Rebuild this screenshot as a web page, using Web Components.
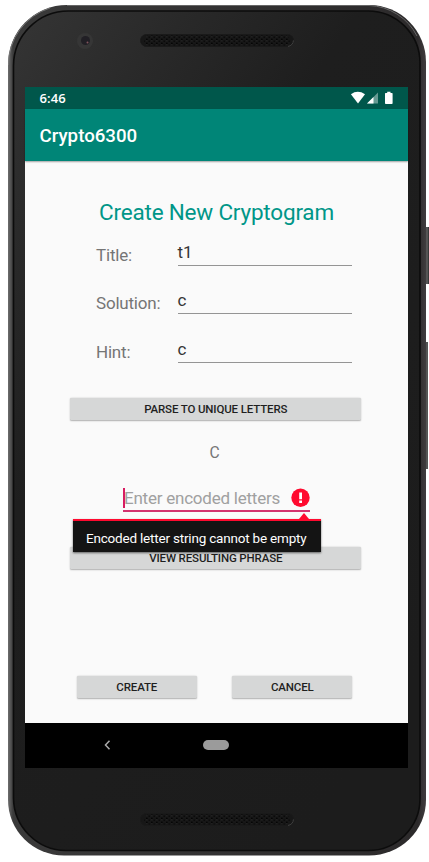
<!DOCTYPE html>
<html lang="en">
<head>
<meta charset="utf-8">
<title>Crypto6300</title>
<style>
html,body{margin:0;background:#fff;font-family:Roboto,"Liberation Sans",sans-serif}
body{width:429px;height:862px;overflow:hidden}
</style>
</head>
<body>
<phone-frame>
  <status-bar time="6:46"></status-bar>
  <app-bar>Crypto6300</app-bar>
  <cryptogram-form></cryptogram-form>
  <nav-bar></nav-bar>
</phone-frame>
<script>
function define(name, render) {
  customElements.define(name, class extends HTMLElement {
    constructor() {
      super();
      const t = document.createElement('template');
      t.innerHTML = render(this);
      this.attachShadow({mode: 'open'}).append(t.content.cloneNode(true));
    }
  });
}

define('speaker-grille', () => `
<style>
:host{display:block;width:154px;height:13px}
svg{display:block}
</style>
<svg width="154" height="13" viewBox="0 0 154 13">
<defs><pattern id="p" width="5" height="4" patternUnits="userSpaceOnUse">
<rect x="1" y="0.6" width="1.7" height="1.7" fill="#050505"/><rect x="3.5" y="2.5" width="1.7" height="1.5" fill="#0b0b0b"/><rect x="1" y="2.5" width="1.5" height=".6" fill="#2d2d2d"/></pattern></defs>
<rect x=".5" y=".5" width="153" height="12" rx="6" fill="#171717" stroke="#1a1a1a"/>
<rect x="4" y="1.6" width="146" height="10" rx="5" fill="url(#p)"/>
<path d="M148 12.4a6 6 0 0 0 5.400-6" fill="none" stroke="#4a4a4a" stroke-width=".8"/>
</svg>`);

define('phone-frame', () => `
<style>
:host{display:block;position:relative;width:429px;height:862px}
.case{box-sizing:border-box;position:absolute;left:0;top:0}
.shell{display:flex;flex-direction:column;align-items:center;position:absolute;left:25px;top:0;width:383px;height:862px}
.top{height:87px;display:flex;width:100%}
.bottom{height:94px;display:flex;width:100%}
.top speaker-grille{margin:34px 0 0 115px}
.bottom speaker-grille{margin:45px 0 0 115px}
.screen{width:383px;height:681px;display:flex;flex-direction:column;background:#fafafa}
</style>
<svg class="case" width="429" height="862" viewBox="0 0 429 862">
<defs>
<linearGradient id="g" x1="0" y1="0" x2=".7" y2="1"><stop offset="0" stop-color="#353535"/><stop offset=".2" stop-color="#292929"/><stop offset=".4" stop-color="#1e1e1e"/><stop offset="1" stop-color="#1c1c1c"/></linearGradient>
<linearGradient id="e" x1="0" y1="0" x2="1" y2="0"><stop offset="0" stop-color="#6e6e6e"/><stop offset=".012" stop-color="#3a3a3a"/><stop offset=".98" stop-color="#2c2a2b"/><stop offset="1" stop-color="#403c3e"/></linearGradient>
</defs>
<rect x="425" y="227" width="4" height="57" fill="#555"/><rect x="428" y="227" width="1" height="57" fill="#393939"/>
<rect x="425" y="342" width="3" height="127" fill="#555"/>
<path d="M67 5H369A57 57 0 0 1 426 62V800A57 55.500 0 0 1 369 855.500H64A56 55.500 0 0 1 8 800V64A59 59 0 0 1 67 5Z" fill="url(#e)"/>
<path d="M67 5.500H369A56 56 0 0 1 417 36" fill="none" stroke="#666"/>
<path d="M8.500 65A59 59 0 0 1 50 8" fill="none" stroke="#777"/>
<path d="M69 11H367A52 52 0 0 1 420 63V798A52 52 0 0 1 367 850.500H66A53 53 0 0 1 13.500 798V66A55 55 0 0 1 69 11Z" fill="url(#g)" stroke="#0c0c0c" stroke-width="1.600"/>
<circle cx="85" cy="41" r="8" fill="#363636"/><circle cx="85.500" cy="40.500" r="4.500" fill="#211f25"/><circle cx="87.500" cy="42.500" r="1" fill="#81535c"/>
</svg>
<div class="shell">
<div class="top"><speaker-grille></speaker-grille></div>
<div class="screen"><slot></slot></div>
<div class="bottom"><speaker-grille></speaker-grille></div>
</div>`);

define('status-bar', el => `
<style>
:host{display:flex;justify-content:space-between;height:22px;background:#00574b;color:#fff}
span{font:600 13px/22px "Open Sans",sans-serif;padding-left:14.500px;letter-spacing:.1px}
svg{margin-right:13px}
</style>
<span>${el.getAttribute('time')}</span>
<svg width="45" height="22" viewBox="0 -.5 45 22">
<path d="M.9 6.700Q7.700 1.900 15 6.700L8 16Z" fill="#fff"/>
<path d="M28 5V16H17Z" fill="#fff" opacity=".4"/><path d="M23.500 9.500V16H17Z" fill="#fff"/>
<path d="M37.200 4.300h3.300v1.200h1.500q.6 0 .6.700v9.600q0 .8-.8.800h-6q-.8 0-.8-.8v-9.600q0-.7.600-.7h1.600z" fill="#fff"/>
</svg>`);

define('app-bar', () => `
<style>
:host{display:flex;align-items:center;box-sizing:border-box;height:52px;padding-top:2px;background:#008577;color:#fff;font-size:18.700px;font-weight:500;padding-left:14.500px;box-shadow:0 1px 1.500px rgba(0,0,0,.35);position:relative}
</style><slot></slot>`);

define('text-row', el => `
<style>
:host{display:grid;grid-template-columns:81.500px 174.500px;height:100%}
label{font-size:17px;line-height:20px;color:#757575;padding-top:6px;letter-spacing:-.2px}
.field{box-sizing:border-box;height:27px;border-bottom:1px solid #949494;font-size:17px;line-height:20px;color:#363636;padding-top:3px}
</style>
<label><slot></slot></label><div class="field">${el.getAttribute('value')}</div>`);

define('push-button', () => `
<style>
:host{display:flex;align-items:center;justify-content:center;height:22px;border-radius:1.500px;background:#d6d7d7;box-shadow:0 .7px 1.500px rgba(0,0,0,.3);color:#1f1f1f;font-size:11.500px;font-weight:500;letter-spacing:-.14px}
</style><slot></slot>`);

define('error-popup', () => `
<style>
:host{display:block;position:absolute;left:-50px;top:25px;width:248px}
svg{display:block;margin-left:224.500px}
.box{box-sizing:border-box;height:33px;border-top:2px solid #ff0a2f;background:#141414;color:#fff;font-size:13.500px;line-height:34px;padding-left:13px;white-space:nowrap;letter-spacing:-.2px;box-shadow:0 1px 2px rgba(0,0,0,.55)}
</style>
<svg width="12" height="6" viewBox="0 0 12 6"><path d="M6 0L11 6H1Z" fill="#ff0a2f"/></svg>
<div class="box"><slot></slot></div>`);

define('encoded-input', () => `
<style>
:host{display:block;position:relative;width:187px;height:24.500px}
.line{display:flex;justify-content:space-between;height:22.500px;color:#a0a0a0}
.rule{height:2px;background:#d4336f}
.hint{display:flex;height:20px;font-size:17px;line-height:20px;white-space:nowrap;letter-spacing:-.23px}
.caret{width:1.500px;height:20px;background:#d81b60;margin-right:-.5px}
</style>
<div class="line"><div class="hint"><div class="caret"></div>Enter encoded letters</div>
<svg width="19" height="20" viewBox="0 0 19 20"><circle cx="9.500" cy="9.800" r="9.200" fill="#ff0a2f"/><path d="M8.200 4.500h2.800v6.700H8.200zM8.200 12.500h2.800v2.400H8.200z" fill="#fff"/></svg></div>
<div class="rule"></div>
<error-popup>Encoded letter string cannot be empty</error-popup>`);

define('cryptogram-form', () => `
<style>
:host{display:flex;flex-direction:column;align-items:center;height:562px;background:#fafafa}
h1{margin:37px 0 0;font-size:22.500px;line-height:28px;font-weight:400;color:#009688;white-space:nowrap;letter-spacing:-.2px}
.fields{display:grid;grid-template-rows:48px 49px 48.500px;width:256px;margin:13px 0 0 15px;height:145.500px}
.wide{width:291px;margin-right:1.500px}
.parse{margin-top:13px}
.letters{font-size:17px;line-height:20px;color:#757575;margin:22px 3px 0 0;transform:scaleX(.92)}
encoded-input{margin:26px 0 0;z-index:1}
.view{margin-top:35px}
.actions{display:grid;grid-template-columns:120px 120px;gap:35.500px;margin-top:107px;margin-right:4px}
</style>
<h1>Create New Cryptogram</h1>
<div class="fields"><text-row value="t1">Title:</text-row><text-row value="c">Solution:</text-row><text-row value="c">Hint:</text-row></div>
<push-button class="wide parse">PARSE TO UNIQUE LETTERS</push-button>
<div class="letters">C</div>
<encoded-input></encoded-input>
<push-button class="wide view">VIEW RESULTING PHRASE</push-button>
<div class="actions"><push-button>CREATE</push-button><push-button>CANCEL</push-button></div>`);

define('nav-bar', () => `
<style>
:host{display:flex;align-items:center;box-sizing:border-box;height:45px;padding-bottom:1px;background:#000}
svg{margin-left:79px}
.home{width:26px;height:10px;border-radius:5px;background:#9b9b9b;margin-left:92px}
</style>
<svg width="7" height="10" viewBox="0 0 7 10"><path d="M5.500 .8L1.500 5L5.500 9.200" fill="none" stroke="#aaa" stroke-width="1.500"/></svg>
<div class="home"></div>`);
</script>
</body>
</html>
